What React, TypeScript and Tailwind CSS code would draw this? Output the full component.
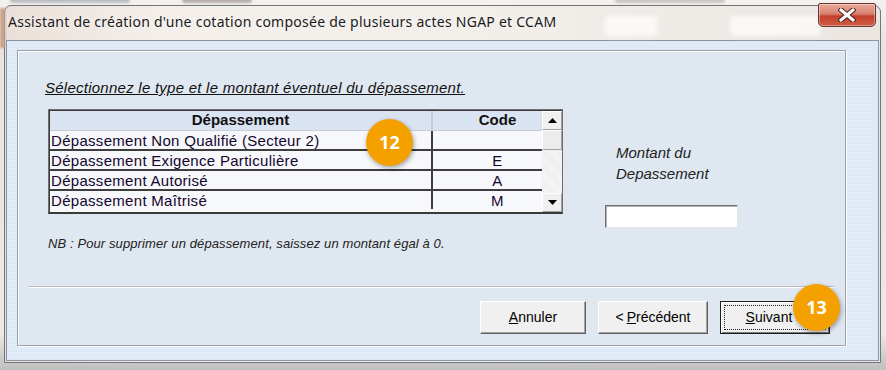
import React from 'react';

const rows = [
  { label: 'Dépassement Non Qualifié (Secteur 2)', code: '' },
  { label: 'Dépassement Exigence Particulière', code: 'E' },
  { label: 'Dépassement Autorisé', code: 'A' },
  { label: 'Dépassement Maîtrisé', code: 'M' },
];

function Badge({ n, pos }: { n: string; pos: string }) {
  return (
    <div
      className={`absolute ${pos} w-[47px] h-[47px] rounded-full bg-[#f4a100] text-white text-[18px] font-bold flex items-center justify-center shadow-[1px_2px_5px_rgba(0,0,0,0.35)] font-['Open_Sans',sans-serif]`}
    >
      {n}
    </div>
  );
}

function WinButton({ children, isDefault, width }: { children: React.ReactNode; isDefault?: boolean; width: string }) {
  if (isDefault) {
    return (
      <div className={`${width} h-[33px] border border-[#1e1e1e] bg-[#f0f0f0] shadow-[inset_1px_1px_0_#fff,inset_-1px_-1px_0_#7a7a7a]`}>
        <div className="m-[3px] h-[25px] border border-dotted border-[#222] flex items-center justify-center text-[14px] text-black">
          {children}
        </div>
      </div>
    );
  }
  return (
    <div
      className={`${width} h-[33px] border border-t-white border-l-white border-r-[#5f5f5f] border-b-[#5f5f5f] bg-[#f0f0f0] shadow-[inset_-1px_-1px_0_#a3a3a3] flex items-center justify-center text-[14px] text-black`}
    >
      {children}
    </div>
  );
}

function Arrow({ up }: { up?: boolean }) {
  return (
    <svg width="9" height="5" viewBox="0 0 9 5">
      {up ? <path d="M0 5 L4.5 0 L9 5 Z" fill="#000" /> : <path d="M0 0 L4.5 5 L9 0 Z" fill="#000" />}
    </svg>
  );
}

export default function App() {
  return (
    <div className="relative w-[886px] h-[370px] overflow-hidden bg-[linear-gradient(180deg,#f4f1ee_0%,#e9e3de_12%,#ece8e4_90%,#bfbfbf_100%)] font-['Liberation_Sans',Arial,sans-serif]">
      {/* blurred content behind the glass */}
      <div className="absolute left-[10px] top-[-3px] w-[120px] h-[6px] rounded bg-[#8a8f98] opacity-50 blur-[1px]" />
      <div className="absolute left-[182px] top-[-3px] w-[70px] h-[6px] rounded bg-[#7b6f6a] opacity-50 blur-[1px]" />
      <div className="absolute left-[615px] top-[-2px] w-[110px] h-[5px] rounded bg-[#8d8888] opacity-40 blur-[1px]" />
      <div className="absolute left-0 top-[8px] w-[5px] h-[40px] bg-[#c9a28c] blur-[1px]" />

      {/* window frame */}
      <div className="ml-[4px] mt-[5px] w-[877px] h-[358px] rounded-t-[7px] border border-[#707680] bg-[linear-gradient(90deg,#eadfd8_0%,#f4efeb_18%,#f2eeea_55%,#ebe6e2_100%)] flex flex-col">
        {/* title bar */}
        <div className="relative h-[34px] pl-[3px] pt-[4px]">
          <div className="absolute left-[600px] top-[10px] w-[52px] h-[20px] rounded bg-white opacity-70 blur-[2px]" />
          <div className="absolute left-[725px] top-[10px] w-[90px] h-[20px] rounded bg-white opacity-70 blur-[2px]" />
          <span className="relative text-[14px] leading-[19px] tracking-[0.25px] text-[#1b1b1b] font-['Noto_Sans',sans-serif] [text-shadow:0_0_6px_#fff]">
            Assistant de création d'une cotation composée de plusieurs actes NGAP et CCAM
          </span>
        </div>

        {/* client area */}
        <div className="ml-[1px] w-[873px] h-[321px] border border-[#8c96a3] bg-[repeating-linear-gradient(180deg,#dbe6f5_0px,#dbe6f5_1px,#e5edf9_1px,#e5edf9_2px)] pl-[10px] pt-[9px]">
          {/* inner panel */}
          <div className="w-[829px] h-[296px] border border-[#9aa1aa] shadow-[1px_1px_0_#fff,inset_1px_1px_0_#fff] bg-[#dfe7f0] flex flex-col">
            <div className="pl-[27px] pt-[28px] text-[15px] leading-[17px] italic underline text-[#111] tracking-[0.25px]">
              Sélectionnez le type et le montant éventuel du dépassement.
            </div>

            <div className="flex items-start pl-[30px] mt-[13px]">
              <div className="flex flex-col">
                {/* grid */}
                <div className="relative w-[515px] h-[105px] border border-[#6e6e6e] border-b-2 border-b-[#3a3a3a] shadow-[inset_1px_1px_0_#3c3c3c] pl-[1px] pt-[1px] bg-[#f6f8fc]">
                  <div className="flex h-[20px] bg-[#d9e3f1] border-b border-[#c3ccd8] text-[15px] font-bold text-[#111]">
                    <div className="w-[381px] flex items-center justify-center">Dépassement</div>
                    <div className="w-[2px] bg-[#c4ccd6]" />
                    <div className="flex-1 flex items-center justify-center">Code</div>
                  </div>
                  {rows.map((r, i) => (
                    <div
                      key={r.label}
                      className={`flex text-[15px] tracking-[0.3px] text-[#15052b] ${i < 3 ? 'border-b-2 border-[#3e3e3e]' : ''}`}
                      style={{ height: i === 3 ? 18 : 20 }}
                    >
                      <div className="w-[381px] pl-[1px] flex items-center leading-none">{r.label}</div>
                      <div className="w-[2px] bg-[#3e3e3e]" />
                      <div className="flex-1 flex items-center justify-center leading-none">{r.code}</div>
                    </div>
                  ))}

                  {/* vertical scrollbar */}
                  <div className="absolute right-0 top-[1px] bottom-0 w-[20px] flex flex-col bg-[repeating-linear-gradient(45deg,#f7f7f7_0px,#f7f7f7_1px,#ececec_1px,#ececec_2px)]">
                    <div className="h-[19px] bg-[#f0f0f0] border border-t-white border-l-white border-r-[#a0a0a0] border-b-[#a0a0a0] flex items-center justify-center">
                      <Arrow up />
                    </div>
                    <div className="h-[20px] bg-[#ececec] border border-t-white border-l-white border-r-[#a0a0a0] border-b-[#a0a0a0]" />
                    <div className="flex-1" />
                    <div className="h-[19px] bg-[#f0f0f0] border border-t-white border-l-white border-r-[#a0a0a0] border-b-[#a0a0a0] flex items-center justify-center">
                      <Arrow />
                    </div>
                  </div>
                </div>

                <div className="mt-[22px] text-[13px] leading-[15px] italic tracking-[0.1px] text-[#222]">
                  NB : Pour supprimer un dépassement, saissez un montant égal à 0.
                </div>
              </div>

              {/* amount */}
              <div className="ml-[42px] pt-[33px] flex flex-col">
                <div className="pl-[11px] text-[15px] leading-[21px] italic text-[#222]">
                  <div>Montant du</div>
                  <div>Depassement</div>
                </div>
                <div className="mt-[21px] w-[133px] h-[23px] bg-white border border-t-[#707070] border-l-[#707070] border-r-[#e6e6e6] border-b-[#e6e6e6] shadow-[inset_1px_1px_0_#b0b0b0]" />
              </div>
            </div>

            <div className="mx-[11px] mt-[35px] h-[2px] border-t border-[#b5bcc6] border-b border-b-white" />

            <div className="flex justify-end gap-[12px] pr-[15px] mt-[13px]">
              <WinButton width="w-[106px]">
                <span className="underline">A</span>nnuler
              </WinButton>
              <WinButton width="w-[110px]">
                &lt; <span className="underline ml-[3px]">P</span>récédent
              </WinButton>
              <WinButton width="w-[110px]" isDefault>
                <span className="underline">S</span>uivant &gt;
              </WinButton>
            </div>
          </div>
        </div>
      </div>

      {/* close button */}
      <div className="absolute left-[818px] top-[3px] w-[58px] h-[24px] rounded-b-[5px] rounded-t-[2px] border border-[#6a3530] bg-[linear-gradient(180deg,#e9a99b_0%,#d9806f_45%,#c2402c_55%,#cf5c44_100%)] shadow-[inset_0_0_0_1px_rgba(255,255,255,0.35)] flex items-center justify-center">
        <svg width="18" height="14" viewBox="0 0 18 14">
          <path d="M3 2 L15 12 M15 2 L3 12" stroke="#4a2220" strokeWidth="5" strokeLinecap="square" />
          <path d="M3 2 L15 12 M15 2 L3 12" stroke="#ffffff" strokeWidth="3" strokeLinecap="square" />
        </svg>
      </div>

      <Badge n="12" pos="left-[366px] top-[119px]" />
      <Badge n="13" pos="left-[793px] top-[284px]" />
    </div>
  );
}
